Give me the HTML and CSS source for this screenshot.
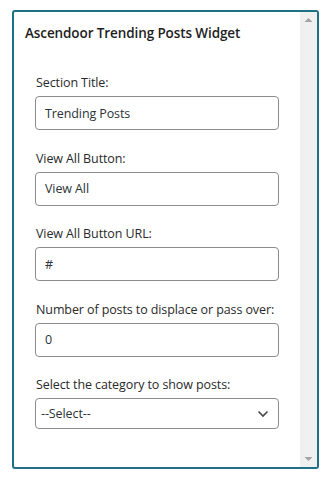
FILE: index.html
```html
<!DOCTYPE html>
<html>
<head>
<meta charset="utf-8">
<link rel="stylesheet" href="styles.css">
</head>
<body>
<div class="widget">
  <div class="content">
    <h2 class="title">Ascendoor Trending Posts Widget</h2>
    <div class="field">
      <label class="label">Section Title:</label>
      <div class="input">Trending Posts</div>
    </div>
    <div class="field">
      <label class="label">View All Button:</label>
      <div class="input">View All</div>
    </div>
    <div class="field">
      <label class="label">View All Button URL:</label>
      <div class="input">#</div>
    </div>
    <div class="field">
      <label class="label">Number of posts to displace or pass over:</label>
      <div class="input">0</div>
    </div>
    <div class="field">
      <label class="label">Select the category to show posts:</label>
      <div class="select">
        <span>--Select--</span>
        <svg class="chev" width="12" height="8" viewBox="0 0 12 8"><path d="M1.5 1.5 L6 6 L10.5 1.5" fill="none" stroke="#4a4a4a" stroke-width="1.7"/></svg>
      </div>
    </div>
  </div>
  <div class="scrollbar">
    <svg width="17" height="17" viewBox="0 0 17 17"><path d="M4.5 10 L8.5 6 L12.5 10 Z" fill="#a3a3a3"/></svg>
    <svg width="17" height="17" viewBox="0 0 17 17"><path d="M4.5 7 L8.5 11 L12.5 7 Z" fill="#a3a3a3"/></svg>
  </div>
</div>
</body>
</html>
```
FILE: styles.css
```css
html, body {
  margin: 0;
  padding: 0;
  background: #ffffff;
}
body {
  font-family: "Open Sans", "Noto Sans", sans-serif;
  color: #1e1e1e;
}
.widget {
  margin: 10px 0 0 12px;
  width: 307px;
  height: 459px;
  box-sizing: border-box;
  border: 2px solid #1f7086;
  border-radius: 3px;
  display: flex;
  overflow: hidden;
}
.content {
  flex: 1;
  padding: 11px 0 0 11px;
}
.title {
  margin: 0 0 30px 0;
  font-size: 13.5px;
  line-height: 20px;
  font-weight: 600;
  letter-spacing: -0.1px;
}
.field {
  display: flex;
  flex-direction: column;
  margin: 0 0 18.5px 10px;
  width: 244px;
}
.label {
  font-size: 12.5px;
  line-height: 20px;
  margin-bottom: 3px;
  margin-left: 1px;
  letter-spacing: -0.1px;
  color: #2a2a2a;
}
.input, .select {
  box-sizing: border-box;
  height: 34px;
  border: 1px solid #8c8c8c;
  border-radius: 4px;
  padding: 0 9px;
  display: flex;
  align-items: center;
  font-size: 12.5px;
  letter-spacing: -0.1px;
  color: #2c3338;
}
.select {
  height: 31px;
  padding: 0 9px 0 5px;
  justify-content: space-between;
}
.chev {
  display: block;
}
.scrollbar {
  width: 17px;
  background: #f0f0f0;
  display: flex;
  flex-direction: column;
  justify-content: space-between;
}
.scrollbar svg {
  display: block;
}
```
